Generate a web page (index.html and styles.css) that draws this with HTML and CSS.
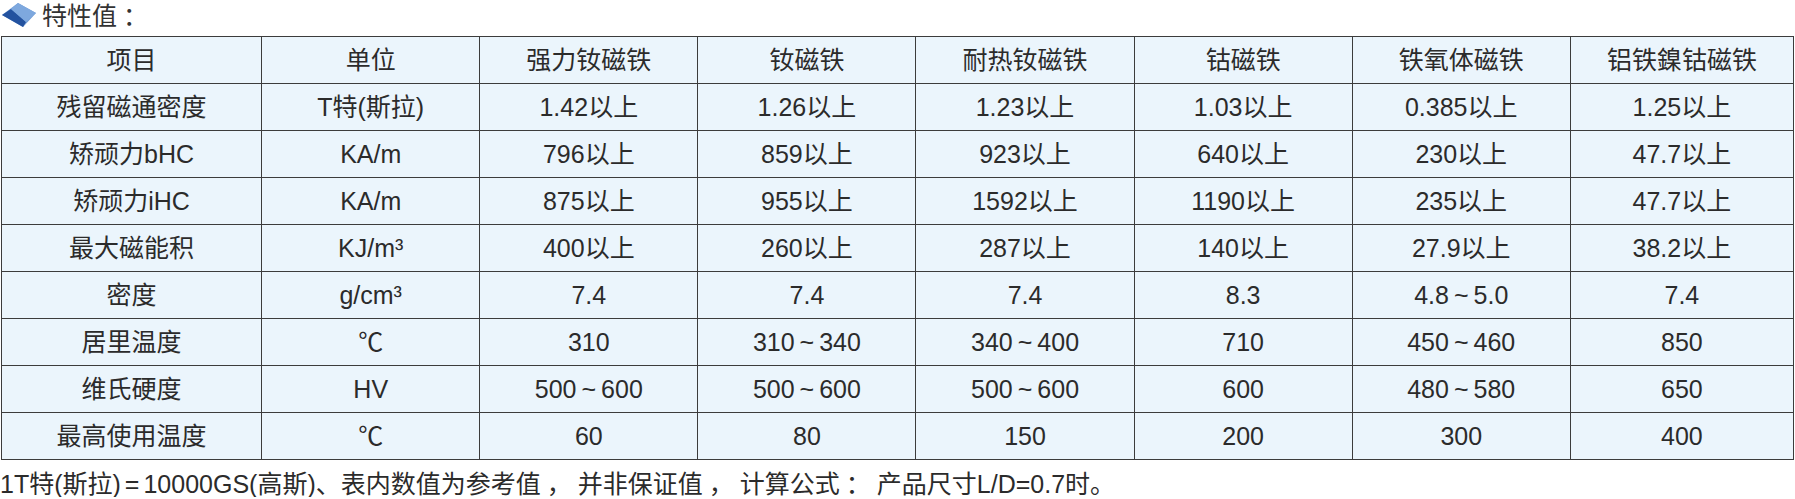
FILE: index.html
```html
<!DOCTYPE html>
<html lang="zh-CN">
<head>
<meta charset="utf-8">
<title>特性值</title>
<link rel="stylesheet" href="styles.css">
</head>
<body>
<div class="title">
  <svg class="title-icon" width="38" height="28" viewBox="0 0 38 28">
    <polygon points="2,13 18,1 36,11 23,25" fill="#6f9bd6"/>
    <polygon points="2,13 11,7 26,20 23,25" fill="#23529f"/>
    <polygon points="11,7 18,1 36,11 26,20" fill="#7ea8de"/>
  </svg>
  <span class="title-text">特性值<span class="title-colon">：</span></span>
</div>
<table class="spec">
  <colgroup>
    <col class="c-first"><col class="c"><col class="c"><col class="c"><col class="c"><col class="c"><col class="c"><col class="c-last">
  </colgroup>
  <tr><td>项目</td><td>单位</td><td>强力钕磁铁</td><td>钕磁铁</td><td>耐热钕磁铁</td><td>钴磁铁</td><td>铁氧体磁铁</td><td>铝铁鎳钴磁铁</td></tr>
  <tr><td>残留磁通密度</td><td>T特(斯拉)</td><td>1.42以上</td><td>1.26以上</td><td>1.23以上</td><td>1.03以上</td><td>0.385以上</td><td>1.25以上</td></tr>
  <tr><td>矫顽力bHC</td><td>KA/m</td><td>796以上</td><td>859以上</td><td>923以上</td><td>640以上</td><td>230以上</td><td>47.7以上</td></tr>
  <tr><td>矫顽力iHC</td><td>KA/m</td><td>875以上</td><td>955以上</td><td>1592以上</td><td>1190以上</td><td>235以上</td><td>47.7以上</td></tr>
  <tr><td>最大磁能积</td><td>KJ/m³</td><td>400以上</td><td>260以上</td><td>287以上</td><td>140以上</td><td>27.9以上</td><td>38.2以上</td></tr>
  <tr><td>密度</td><td>g/cm³</td><td>7.4</td><td>7.4</td><td>7.4</td><td>8.3</td><td>4.8<span class="tilde">~</span>5.0</td><td>7.4</td></tr>
  <tr><td>居里温度</td><td>℃</td><td>310</td><td>310<span class="tilde">~</span>340</td><td>340<span class="tilde">~</span>400</td><td>710</td><td>450<span class="tilde">~</span>460</td><td>850</td></tr>
  <tr><td>维氏硬度</td><td>HV</td><td>500<span class="tilde">~</span>600</td><td>500<span class="tilde">~</span>600</td><td>500<span class="tilde">~</span>600</td><td>600</td><td>480<span class="tilde">~</span>580</td><td>650</td></tr>
  <tr><td>最高使用温度</td><td>℃</td><td>60</td><td>80</td><td>150</td><td>200</td><td>300</td><td>400</td></tr>
</table>
<p class="note">1T特(斯拉)<span class="eq">=</span>10000GS(高斯)、表内数值为参考值<span class="punct">，</span>并非保证值<span class="punct">，</span>计算公式<span class="punct">：</span>产品尺寸L/D=0.7时。</p>
</body>
</html>
```

FILE: styles.css
```css
html, body {
  margin: 0;
  padding: 0;
  background: #ffffff;
}
body {
  font-family: "Liberation Sans", "Noto Sans CJK SC", sans-serif;
  color: #2b2b2b;
}
.title {
  display: flex;
  align-items: center;
  height: 30px;
  padding-top: 1px;
  margin-bottom: 5px;
}
.title-icon {
  display: block;
  margin-right: 4px;
}
.title-text {
  font-size: 25px;
  line-height: 30px;
  color: #333333;
}
.title-colon {
  margin-left: 6px;
}
.punct {
  font-family: "Noto Sans CJK TC", sans-serif;
  line-height: 0;
  margin: 0 6px;
}
.tilde {
  margin: 0 5px;
}
.eq {
  margin: 0 4px;
}
.spec {
  border-collapse: collapse;
  table-layout: fixed;
  width: 1793px;
  margin-left: 1px;
  background: #ebf5fc;
}
.c-first { width: 260px; }
.c { width: 218px; }
.c-last { width: 223px; }
.spec td {
  border: 1px solid #3c3c3c;
  height: 46px;
  padding: 0;
  text-align: center;
  vertical-align: middle;
  font-size: 25px;
  line-height: 30px;
  white-space: nowrap;
}
.note {
  margin: 11px 0 0 0;
  font-size: 25px;
  line-height: 26px;
  white-space: nowrap;
}
```
